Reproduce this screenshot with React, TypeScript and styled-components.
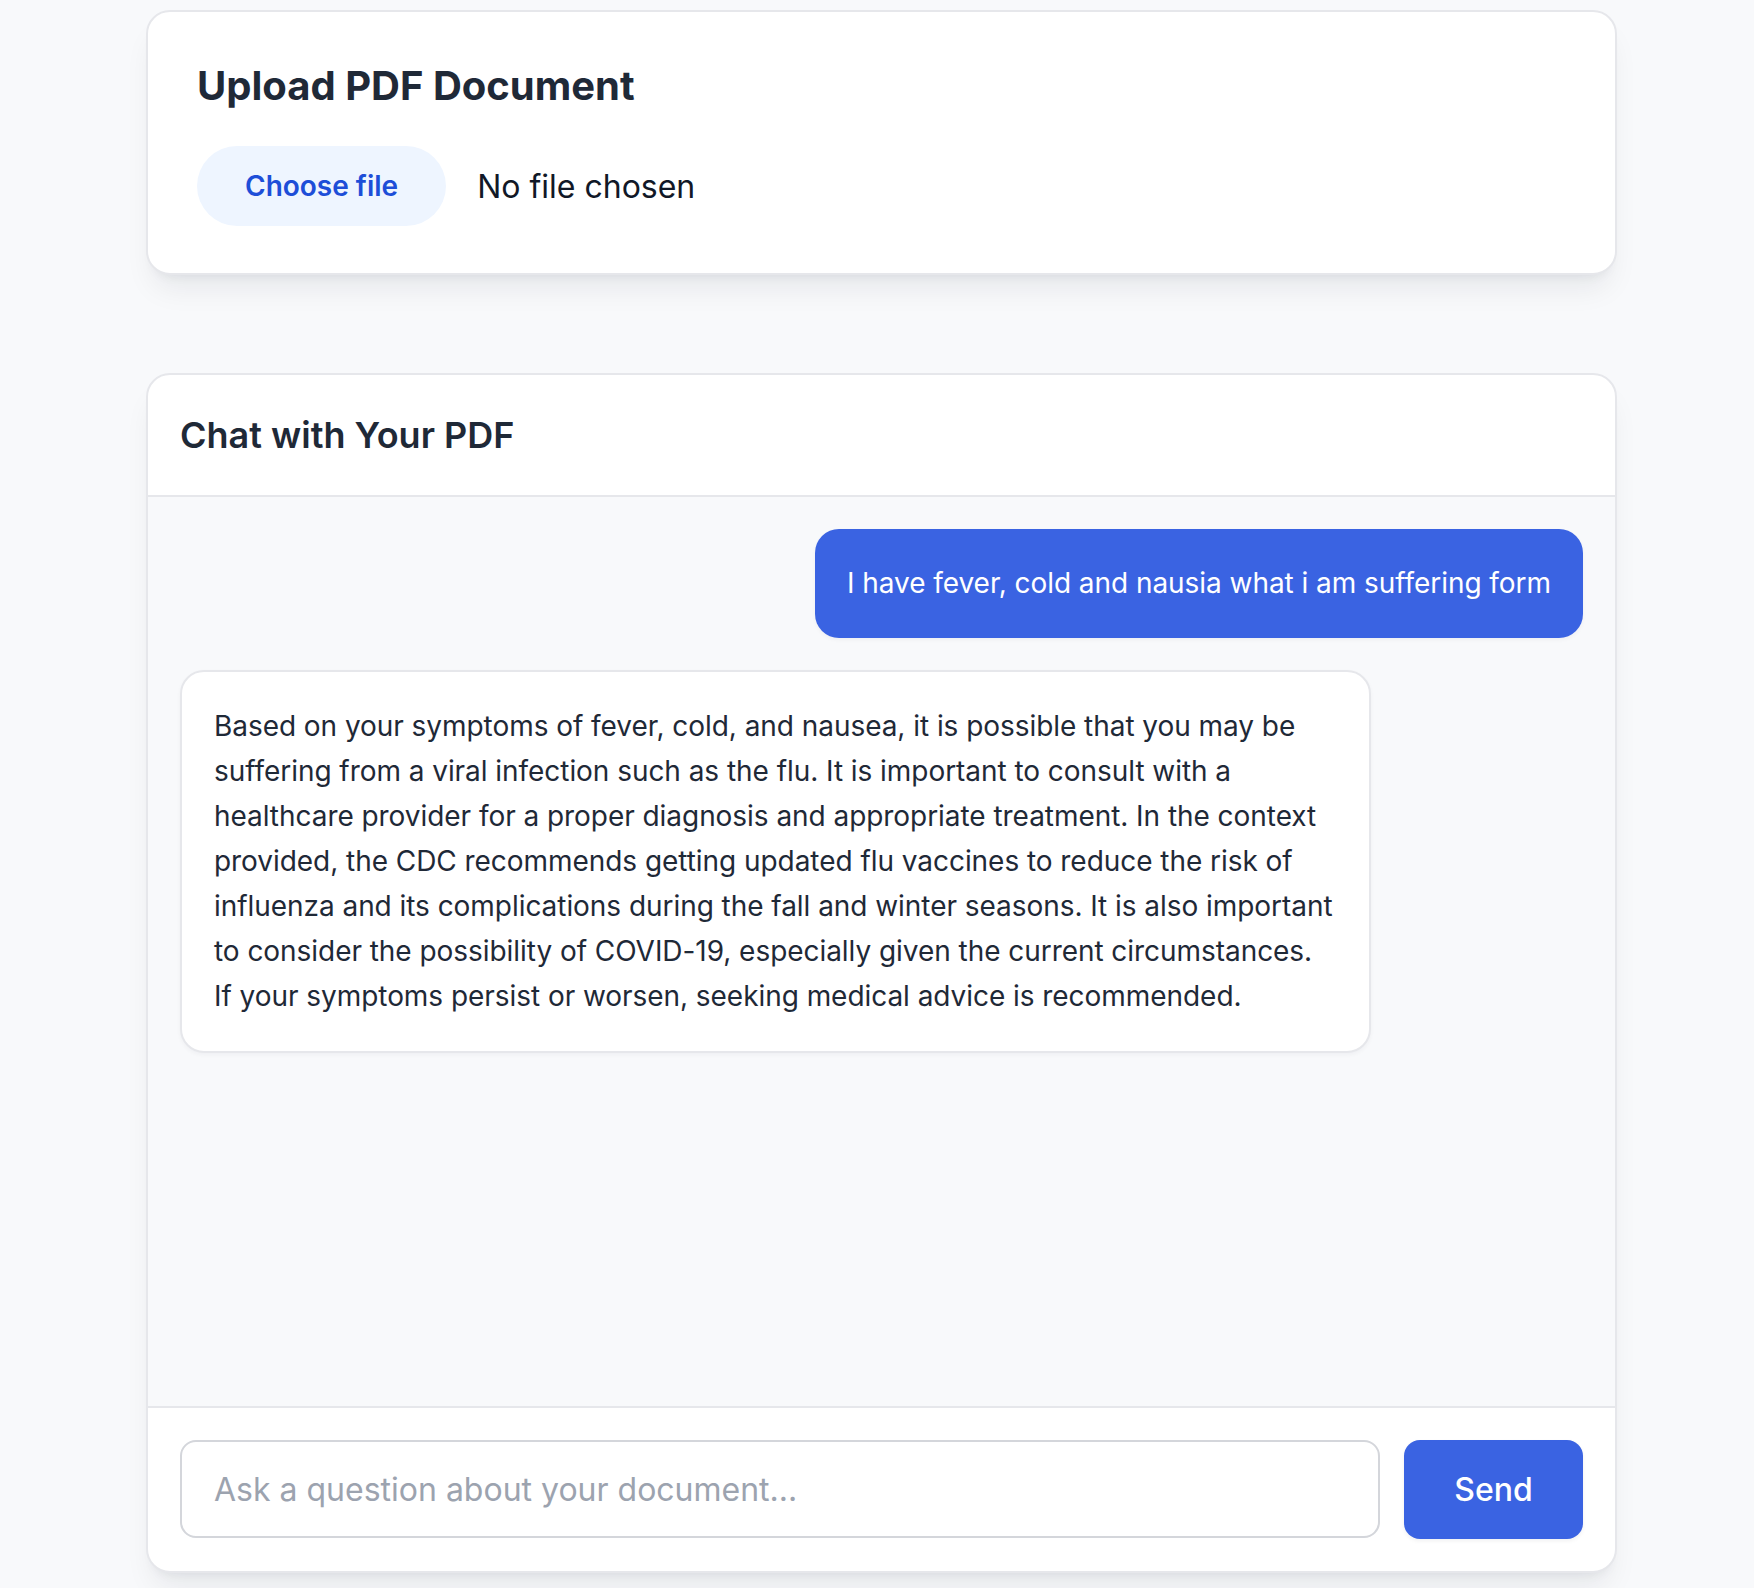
import React from "react";
import styled, { createGlobalStyle } from "styled-components";

const GlobalStyle = createGlobalStyle`
  * { box-sizing: border-box; }
  html, body { margin: 0; padding: 0; background: #f8f9fb; }
  body {
    font-family: Inter, "Noto Sans", "Liberation Sans", sans-serif;
    color: #1f2937;
    -webkit-font-smoothing: antialiased;
  }
`;

const Page = styled.main`
  min-height: 1588px;
  padding: 10px 0 0 146px;
`;

const Column = styled.div`
  width: 1471px;
  display: flex;
  flex-direction: column;
  gap: 98px;
`;

const Card = styled.section`
  background: #ffffff;
  border: 2px solid #e6e7eb;
  border-radius: 24px;
  box-shadow: 0 20px 30px -8px rgba(17, 24, 39, 0.08), 0 8px 12px -8px rgba(17, 24, 39, 0.08);
  overflow: hidden;
`;

const UploadCard = styled(Card)`
  padding: 46px 48px 47px 49px;
`;

const UploadTitle = styled.h2`
  margin: 0 0 32px;
  font-size: 40px;
  line-height: 56px;
  font-weight: 700;
  color: #1f2937;
`;

const FileRow = styled.div`
  display: flex;
  align-items: center;
  gap: 31px;
`;

const FileButton = styled.label`
  display: inline-flex;
  align-items: center;
  height: 80px;
  padding: 0 48px;
  border-radius: 9999px;
  background: #eef5ff;
  color: #1d4ed8;
  font-size: 28px;
  font-weight: 600;
  cursor: pointer;
  input { display: none; }
`;

const FileStatus = styled.span`
  font-size: 32px;
  color: #111827;
`;

const ChatCard = styled(Card)`
  height: 1200px;
  display: flex;
  flex-direction: column;
`;

const ChatHeader = styled.header`
  padding: 32px;
  border-bottom: 2px solid #e6e7eb;
`;

const ChatTitle = styled.h2`
  margin: 0;
  font-size: 36px;
  line-height: 56px;
  font-weight: 600;
  color: #1f2937;
`;

const Messages = styled.div`
  flex: 1;
  background: #f8f9fb;
  padding: 32px;
  display: flex;
  flex-direction: column;
  gap: 32px;
  overflow-y: auto;
`;

const Bubble = styled.div<{ $mine?: boolean }>`
  max-width: 1191px;
  align-self: ${(p) => (p.$mine ? "flex-end" : "flex-start")};
  padding: ${(p) => (p.$mine ? "32px" : "32px 34px 32px 32px")};
  border-radius: 24px;
  font-size: 28px;
  line-height: 45px;
  letter-spacing: -0.05px;
  background: ${(p) => (p.$mine ? "#3a63e2" : "#ffffff")};
  color: ${(p) => (p.$mine ? "#ffffff" : "#1f2937")};
  border: ${(p) => (p.$mine ? "none" : "2px solid #e6e7eb")};
  box-shadow: 0 2px 4px rgba(17, 24, 39, 0.04);
`;

const Composer = styled.form`
  border-top: 2px solid #e6e7eb;
  padding: 32px;
  display: flex;
  gap: 24px;
`;

const TextInput = styled.input`
  flex: 1;
  height: 98px;
  border: 2px solid #d4d6db;
  border-radius: 16px;
  padding: 0 32px;
  font-family: inherit;
  font-size: 32px;
  color: #1f2937;
  outline: none;
  &::placeholder { color: #9ca3af; }
`;

const SendButton = styled.button`
  width: 179px;
  height: 99px;
  border: none;
  border-radius: 16px;
  background: #3a63e2;
  color: #ffffff;
  font-family: inherit;
  font-size: 32px;
  font-weight: 500;
  box-shadow: 0 2px 4px rgba(17, 24, 39, 0.06);
  cursor: pointer;
`;

const answer =
  "Based on your symptoms of fever, cold, and nausea, it is possible that you may be suffering from a viral infection such as the flu. It is important to consult with a healthcare provider for a proper diagnosis and appropriate treatment. In the context provided, the CDC recommends getting updated flu vaccines to reduce the risk of influenza and its complications during the fall and winter seasons. It is also important to consider the possibility of COVID-19, especially given the current circumstances. If your symptoms persist or worsen, seeking medical advice is recommended.";

export default function App() {
  return (
    <>
      <GlobalStyle />
      <Page>
        <Column>
          <UploadCard>
            <UploadTitle>Upload PDF Document</UploadTitle>
            <FileRow>
              <FileButton>
                Choose file
                <input type="file" accept="application/pdf" />
              </FileButton>
              <FileStatus>No file chosen</FileStatus>
            </FileRow>
          </UploadCard>
          <ChatCard>
            <ChatHeader>
              <ChatTitle>Chat with Your PDF</ChatTitle>
            </ChatHeader>
            <Messages>
              <Bubble $mine>I have fever, cold and nausia what i am suffering form</Bubble>
              <Bubble>{answer}</Bubble>
            </Messages>
            <Composer onSubmit={(e) => e.preventDefault()}>
              <TextInput placeholder="Ask a question about your document..." />
              <SendButton type="submit">Send</SendButton>
            </Composer>
          </ChatCard>
        </Column>
      </Page>
    </>
  );
}
